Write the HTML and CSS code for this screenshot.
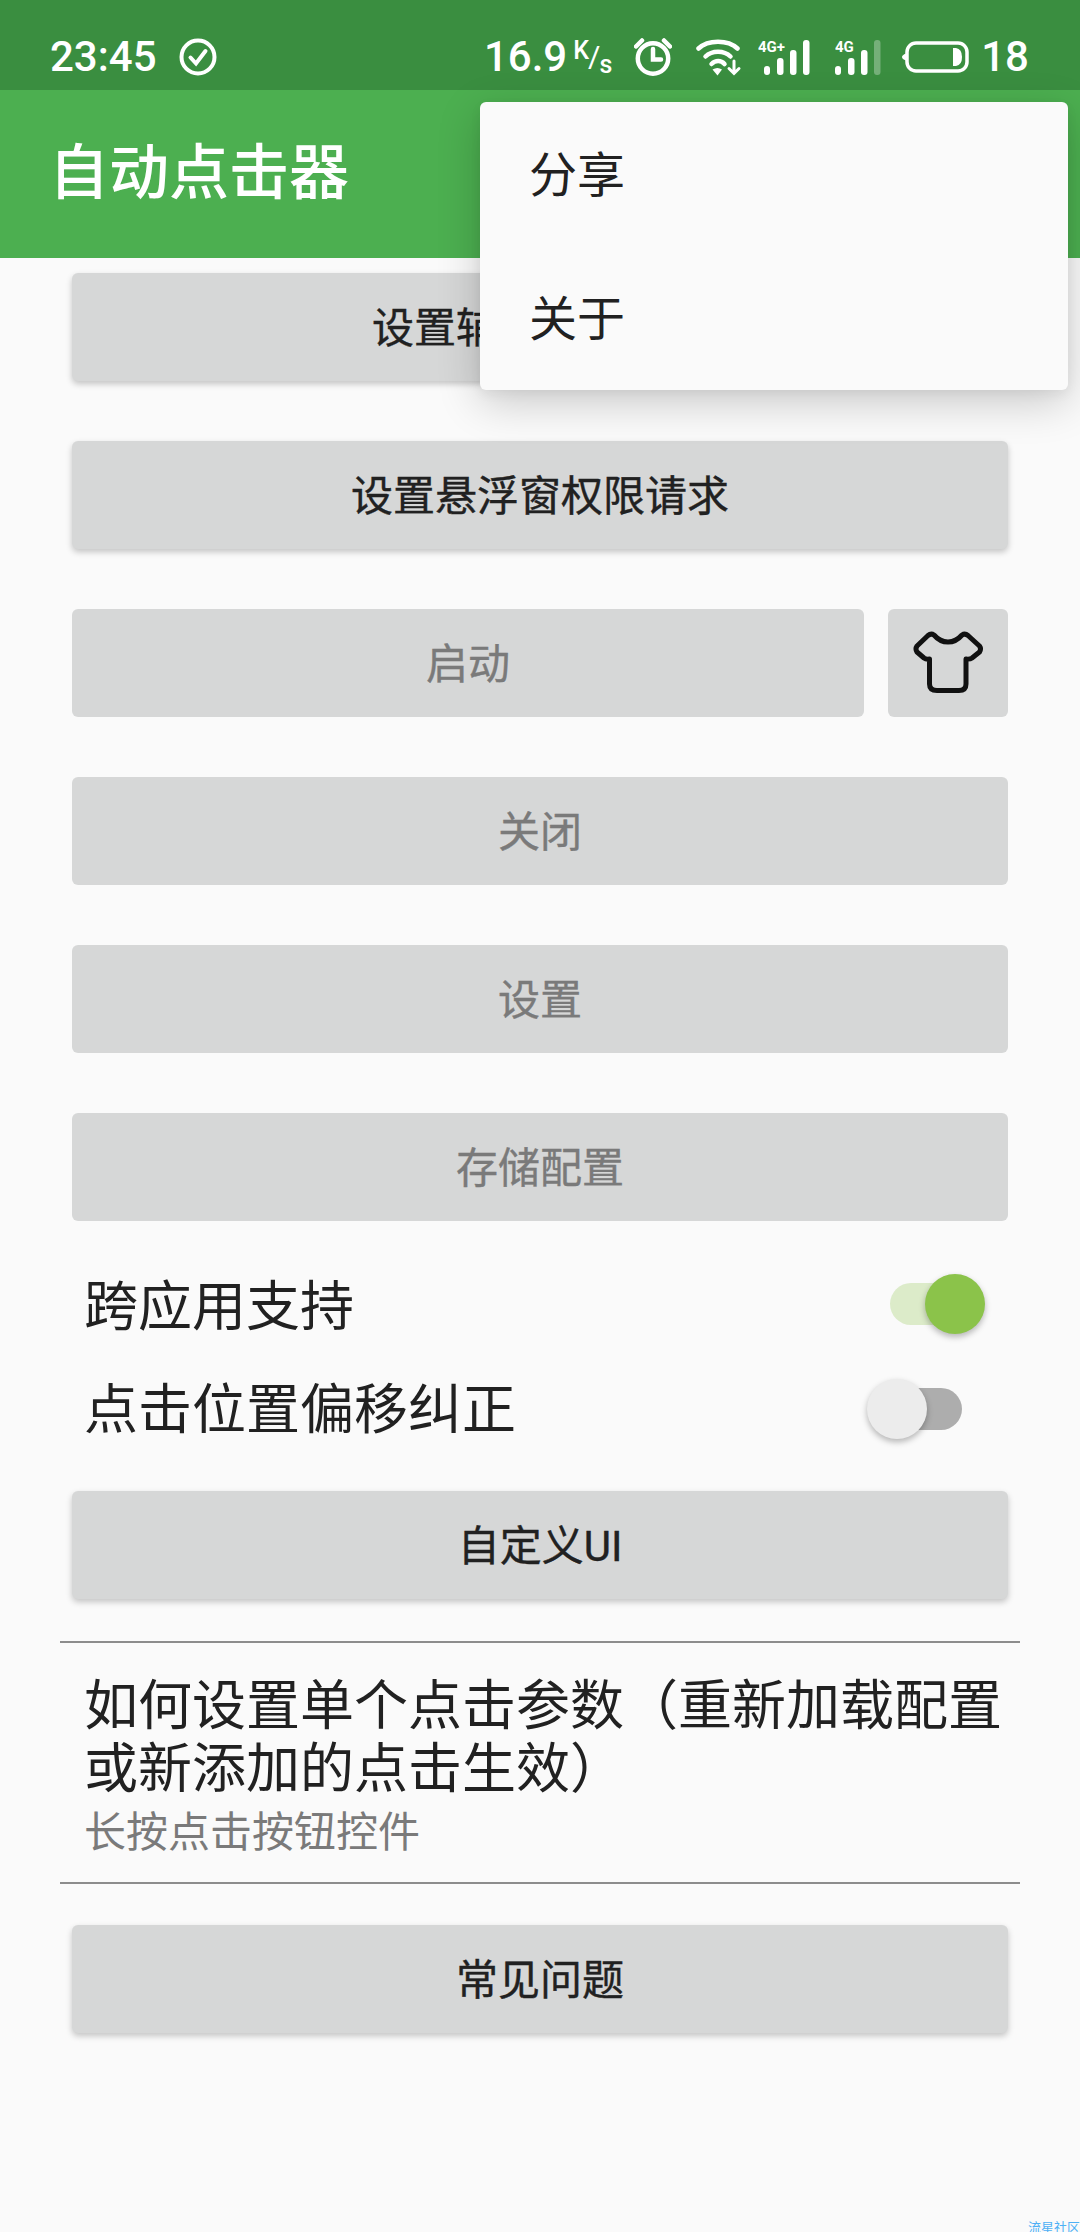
FILE: index.html
```html
<!DOCTYPE html>
<html lang="zh-CN">
<head>
<meta charset="utf-8">
<title>自动点击器</title>
<link rel="stylesheet" href="styles.css">
</head>
<body>
<div class="screen">
  <header class="status">
    <div class="status-left">
      <span class="time">23:45</span>
      <svg class="ic-check" viewBox="0 0 38 38"><circle cx="19" cy="19" r="16.5"/><path d="M11.5 19.5l5.5 6 9.5-12.5"/></svg>
    </div>
    <div class="status-right">
      <span class="speed">16.9</span>
      <span class="unit"><span class="unit-k">K</span><span class="unit-sl">/</span><span class="unit-s">s</span></span>
      <svg class="ic-alarm" viewBox="0 0 38 38"><circle cx="19" cy="20.5" r="15.2"/><path d="M19 11v10.5h8"/><path d="M2 8.5L8 2.5M36 8.5L30 2.5"/></svg>
      <svg class="ic-wifi" viewBox="0 0 46 38"><path d="M2.5 10.500C12 1.500 32 1.500 41.500 10.500"/><path d="M9.500 18.500C16 12 28 12 34.500 18.500"/><path d="M15.500 26C19.500 22 25 22 28.500 26"/><path class="fill" d="M16.500 31.500Q21.500 28.500 26 31.500L21.500 37.500Z"/><path d="M38 23v12M33 30.500l5 5 5-5" class="thin"/></svg>
      <svg class="ic-signal" viewBox="0 0 52 38"><text x="0" y="14" class="sig-text">4G+</text><rect x="6" y="28" width="6" height="9" rx="3"/><rect x="19" y="20" width="6.500" height="17" rx="3"/><rect x="32" y="12" width="6.500" height="25" rx="3"/><rect x="45" y="2" width="6.500" height="35" rx="3"/></svg>
      <svg class="ic-signal2" viewBox="0 0 46 38"><text x="0" y="14" class="sig-text">4G</text><rect x="0" y="28" width="6" height="9" rx="3"/><rect x="13" y="20" width="6.500" height="17" rx="3"/><rect x="26" y="12" width="6.500" height="25" rx="3"/><rect class="dim" x="39" y="2" width="6.500" height="35" rx="3"/></svg>
      <svg class="ic-batt" viewBox="0 0 68 32"><path class="fill" d="M5 12.500Q1 14 1 16t4 3.500z"/><rect x="6" y="2" width="60" height="28" rx="9"/><path class="fill" d="M52 7h3q6 1 6 9t-6 9h-3z"/></svg>
      <span class="batt">18</span>
    </div>
  </header>

  <div class="appbar"><h1 class="title">自动点击器</h1></div>

  <main class="content">
    <button class="btn raised">设置辅助功能权限</button>
    <button class="btn raised">设置悬浮窗权限请求</button>
    <div class="btn-row">
      <button class="btn flat grow">启动</button>
      <button class="btn flat icon-btn" aria-label="皮肤">
        <svg class="ic-shirt" viewBox="0 0 72 72"><path d="M5 19L16 8.500Q19 6 22 8Q28 15 36 15Q44 15 50 8Q53 6 56 8.500L67.500 19Q69.500 22 67.500 25L60 31Q58 32.500 54 32V57Q54 63.500 47 63.500H25Q17.500 63.500 17.500 57V32Q14 32.500 12 31L5 25Q3 22 5 19Z"/></svg>
      </button>
    </div>
    <button class="btn flat">关闭</button>
    <button class="btn flat">设置</button>
    <button class="btn flat">存储配置</button>

    <div class="switch-row first">
      <span class="switch-label">跨应用支持</span>
      <span class="switch on"><span class="thumb"></span></span>
    </div>
    <div class="switch-row second">
      <span class="switch-label">点击位置偏移纠正</span>
      <span class="switch off"><span class="thumb"></span></span>
    </div>

    <button class="btn raised custom">自定义UI</button>

    <section class="info">
      <p class="info-title">如何设置单个点击参数（重新加载配置或新添加的点击生效）</p>
      <p class="info-sub">长按点击按钮控件</p>
    </section>

    <button class="btn raised faq">常见问题</button>
  </main>

  <nav class="menu">
    <div class="menu-item">分享</div>
    <div class="menu-item">关于</div>
  </nav>

  <div class="watermark">流星社区</div>
</div>
</body>
</html>
```

FILE: styles.css
```css
* { box-sizing: border-box; }
html, body { margin: 0; padding: 0; }
body { background: #fafafa; font-family: Roboto, "Noto Sans CJK SC", sans-serif; }
.screen { position: relative; width: 1080px; height: 2232px; overflow: hidden; background: #fafafa; }

/* status bar */
.status { height: 90px; background: #3a8e40; color: #fff; display: flex; justify-content: space-between; align-items: center; padding: 0 51px 0 50px; }
.status-left, .status-right { display: flex; align-items: center; height: 38px; margin-top: 24px; }
.time, .speed, .batt { font-size: 42px; font-weight: 500; line-height: 38px; }
.time { width: 129px; }
.status svg { display: block; fill: none; stroke: #fff; stroke-linecap: round; }
.ic-check { width: 38px; height: 38px; stroke-width: 4; }
.ic-alarm { width: 38px; height: 38px; stroke-width: 4.500; margin-left: 23px; }
.ic-wifi { width: 46px; height: 38px; stroke-width: 4.500; margin-left: 24px; }
.ic-signal { width: 52px; height: 38px; margin-left: 16px; }
.ic-signal2 { width: 46px; height: 38px; margin-left: 25px; }
.ic-batt { width: 68px; height: 32px; stroke-width: 3.500; margin-left: 20px; }
.batt { margin-left: 12px; }
.status .fill { fill: #fff; stroke: none; }
.status .thin { stroke-width: 3; }
.ic-signal rect, .ic-signal2 rect { fill: #fff; stroke: none; }
.ic-signal2 .dim { fill: rgba(255, 255, 255, .3); }
.sig-text { font-family: Roboto, sans-serif; font-size: 15px; font-weight: 700; fill: #fff; stroke: none; }
.unit { display: flex; align-items: flex-start; width: 38px; height: 38px; margin-left: 6px; font-weight: 500; line-height: 1; }
.unit-k { font-size: 25px; }
.unit-sl { font-size: 30px; font-weight: 400; margin: 4px 0 0 -1px; }
.unit-s { font-size: 25px; margin-top: 14px; margin-left: -1px; }

/* app bar */
.appbar { height: 168px; background: #4caf50; display: flex; align-items: center; padding-left: 49px; }
.title { margin: 0; font-size: 60px; font-weight: 500; color: #fff; line-height: 1; }

/* content */
.content { display: flex; flex-direction: column; padding: 15px 72px 0; }
.btn { display: flex; align-items: center; justify-content: center; width: 100%; height: 108px; margin: 0 0 60px; padding: 0 0 6px; border: 0; border-radius: 6px; background: #d6d7d7; font-family: inherit; font-size: 42px; font-weight: 400; -webkit-text-stroke: .4px currentColor; flex: none; }
.raised { color: #212121; box-shadow: 0 3px 6px rgba(0, 0, 0, .22); }
.flat { color: #7a7a7a; }
.btn-row { display: flex; gap: 24px; }
.grow { flex: 1; width: auto; }
.icon-btn { width: 120px; padding: 0; }
.ic-shirt { display: block; width: 72px; height: 72px; fill: none; stroke: #111; stroke-width: 5; stroke-linejoin: round; }

.switch-row { display: flex; justify-content: space-between; align-items: center; padding-left: 12px; }
.switch-label { font-size: 54px; color: #212121; line-height: 1; }
.first { height: 103px; margin-top: -25px; padding-right: 34px; }
.first .switch { margin-bottom: 8px; }
.second { height: 103px; padding-right: 46px; margin-bottom: 29px; }
.second .switch { margin-bottom: 4px; }
.switch { position: relative; display: block; width: 84px; height: 42px; border-radius: 21px; }
.switch.on { background: #dcebc9; }
.switch.off { background: #adadad; }
.thumb { position: absolute; top: -9px; width: 60px; height: 60px; border-radius: 50%; box-shadow: 0 3px 6px rgba(0, 0, 0, .28); }
.on .thumb { right: -11px; background: #8bc34a; }
.off .thumb { left: -11px; background: #ececec; }

.custom { margin-bottom: 0; }
.info { margin: 42px -12px 41px; padding: 32px 0 0 24px; border-top: 2px solid #8c8c8c; border-bottom: 2px solid #8c8c8c; height: 243px; }
.info-title { margin: 0; font-size: 54px; line-height: 63px; color: #212121; }
.info-sub { margin: 7px 0 0; font-size: 42px; line-height: 50px; color: #7a7a7a; }
.faq { margin-bottom: 0; }

/* overflow menu */
.menu { position: absolute; top: 102px; left: 480px; width: 588px; height: 288px; background: #fafafa; border-radius: 6px; box-shadow: 0 12px 44px rgba(0, 0, 0, .2), 0 4px 12px rgba(0, 0, 0, .05); }
.menu-item { display: flex; align-items: center; height: 144px; padding: 0 0 6px 49px; font-size: 48px; color: #212121; }

.watermark { position: absolute; right: 0; bottom: -2px; font-size: 13px; line-height: 1; color: #4db0f5; }
```
